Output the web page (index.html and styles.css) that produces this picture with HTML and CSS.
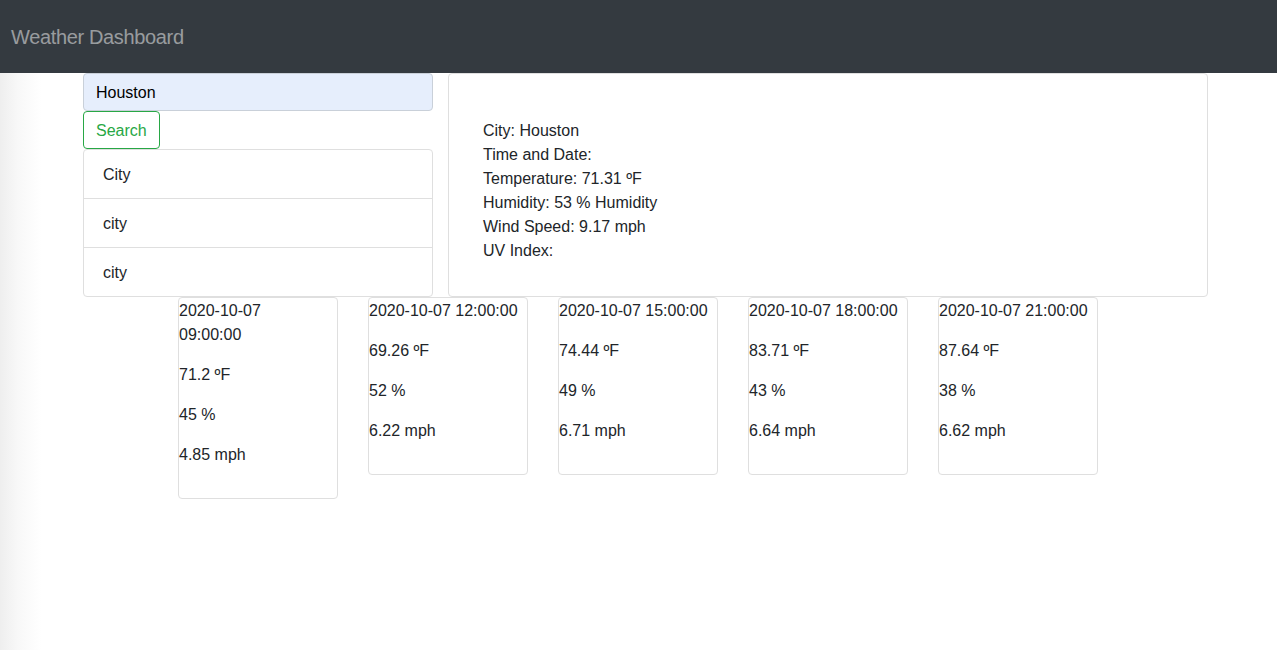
FILE: index.html
```html
<!DOCTYPE html>
<html lang="en">
<head>
<meta charset="utf-8">
<title>Weather Dashboard</title>
<link rel="stylesheet" href="styles.css">
</head>
<body>
<nav class="navbar">
  <span class="brand">Weather Dashboard</span>
</nav>
<main class="container">
  <div class="top-row">
    <div class="search-col">
      <input class="search-input" type="text" value="Houston">
      <button class="btn-search" type="button">Search</button>
      <ul class="city-list">
        <li class="city-item">City</li>
        <li class="city-item">city</li>
        <li class="city-item">city</li>
      </ul>
    </div>
    <section class="current-card">
      <div class="line">City: Houston</div>
      <div class="line">Time and Date:</div>
      <div class="line">Temperature: 71.31 ºF</div>
      <div class="line">Humidity: 53 % Humidity</div>
      <div class="line">Wind Speed: 9.17 mph</div>
      <div class="line">UV Index:</div>
    </section>
  </div>
  <div class="forecast-row">
    <div class="fc-card">
      <p>2020-10-07<br>09:00:00</p>
      <p>71.2 ºF</p>
      <p>45 %</p>
      <p>4.85 mph</p>
    </div>
    <div class="fc-card">
      <p>2020-10-07 12:00:00</p>
      <p>69.26 ºF</p>
      <p>52 %</p>
      <p>6.22 mph</p>
    </div>
    <div class="fc-card">
      <p>2020-10-07 15:00:00</p>
      <p>74.44 ºF</p>
      <p>49 %</p>
      <p>6.71 mph</p>
    </div>
    <div class="fc-card">
      <p>2020-10-07 18:00:00</p>
      <p>83.71 ºF</p>
      <p>43 %</p>
      <p>6.64 mph</p>
    </div>
    <div class="fc-card">
      <p>2020-10-07 21:00:00</p>
      <p>87.64 ºF</p>
      <p>38 %</p>
      <p>6.62 mph</p>
    </div>
  </div>
</main>
</body>
</html>
```

FILE: styles.css
```css
* { box-sizing: border-box; }

html, body {
  margin: 0;
  padding: 0;
  height: 100%;
}

body {
  font-family: "Liberation Sans", Arial, sans-serif;
  font-size: 16px;
  line-height: 24px;
  color: #212529;
  background: linear-gradient(to right, #eeeeee 0px, #f8f8f8 18px, #ffffff 42px);
}

.navbar {
  height: 73px;
  background: #343a40;
  display: flex;
  align-items: center;
  padding: 1px 11px 0;
}

.brand {
  font-size: 20px;
  line-height: 30px;
  letter-spacing: -0.35px;
  color: rgba(255, 255, 255, 0.5);
}

.container {
  width: 1110px;
  margin-left: 83px;
}

.top-row {
  display: flex;
  gap: 15px;
}

.search-col {
  width: 350px;
  display: flex;
  flex-direction: column;
  align-items: flex-start;
}

.search-input {
  width: 350px;
  height: 38px;
  padding: 7px 12px 5px;
  font: inherit;
  color: #000;
  background: #e6eefc;
  border: 1px solid #c9d0d9;
  border-radius: 4px;
  outline: none;
}

.btn-search {
  height: 38px;
  padding: 7px 12px 5px;
  font: inherit;
  color: #28a745;
  background: #fff;
  border: 1px solid #28a745;
  border-radius: 4px;
}

.city-list {
  list-style: none;
  margin: 0;
  padding: 0;
  width: 350px;
  border: 1px solid #dfdfdf;
  border-radius: 4px;
}

.city-item {
  height: 49px;
  padding: 13px 19px 11px;
  border-top: 1px solid #dfdfdf;
}

.city-item:first-child {
  border-top: 0;
  height: 48px;
}

.current-card {
  width: 760px;
  height: 224px;
  margin-right: -15px;
  border: 1px solid #dfdfdf;
  border-radius: 4px;
  padding: 45px 34px 0;
}

.forecast-row {
  display: flex;
  gap: 30px;
  padding-left: 95px;
}

.fc-card {
  width: 160px;
  border: 1px solid #dfdfdf;
  border-radius: 4px;
  padding: 1px 0 15px;
  align-self: flex-start;
}

.fc-card p {
  margin: 0 0 16px;
}
```
